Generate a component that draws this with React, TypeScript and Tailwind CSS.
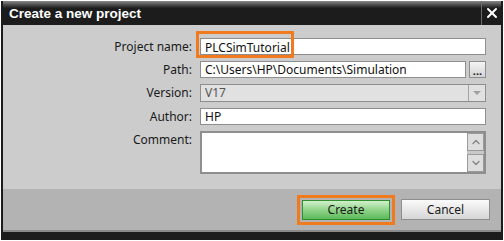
import { ChevronDown, ChevronUp, X } from 'lucide-react';

const font = { fontFamily: '"Noto Sans", "DejaVu Sans", sans-serif' };

function Label({ children }: { children: React.ReactNode }) {
  return <div className="w-[197px] shrink-0 pr-[8px] text-right text-[12px] text-[#1a1a1a]">{children}</div>;
}

export default function App() {
  return (
    <div className="h-[241px] w-[504px] bg-white pt-px pl-px" style={font}>
      <div className="flex h-[239px] w-[502px] flex-col border-x-2 border-[#1c1c1c] bg-[#cccccc]">
        {/* Title bar */}
        <div className="flex h-[24px] items-stretch bg-gradient-to-b from-[#8a8a8a] via-[#1c1c1c] via-30% to-[#1c1c1c]">
          <div
            className="flex-1 pl-[6px] pt-[3px] text-[13.5px] font-bold text-white"
            style={{ fontFamily: '"Liberation Sans", Arial, sans-serif' }}
          >
            Create a new project
          </div>
          <div className="flex w-[20px] items-center justify-center border-l border-[#6a6a6a]">
            <X className="h-[16px] w-[16px] text-white" strokeWidth={3} />
          </div>
        </div>

        {/* Form */}
        <div className="flex flex-1 flex-col gap-[6px] pt-[13px]">
          <div className="flex h-[17px] items-center">
            <Label>Project name:</Label>
            <div className="relative h-[17px] w-[286px] border border-[#8e8e8e] bg-white pl-[4px] text-[12px] leading-[15px] text-[#111]">
              <div className="pointer-events-none absolute -left-[5px] -top-[8px] z-10 h-[27px] w-[98px] border-[3px] border-[#f07a1d]" />
              PLCSimTutorial<span className="ml-[2px] inline-block h-[13px] w-px translate-y-[2px] bg-[#111]" />
            </div>
          </div>
          <div className="flex h-[17px] items-center">
            <Label>Path:</Label>
            <div className="flex h-[17px] w-[286px] gap-[3px]">
              <div className="flex-1 border border-[#8e8e8e] bg-white pl-[4px] text-[12px] leading-[15px] text-[#111]">
                C:\Users\HP\Documents\Simulation
              </div>
              <div className="flex w-[17px] items-end justify-center border border-[#8e8e8e] bg-gradient-to-b from-[#f4f4f4] to-[#d4d4d4] pb-[2px] text-[11px] font-bold leading-[8px] text-[#222]">
                ...
              </div>
            </div>
          </div>
          <div className="flex h-[18px] items-center">
            <Label>Version:</Label>
            <div className="flex h-[18px] w-[286px] items-stretch border border-[#8e8e8e] bg-[#e1e1e1]">
              <div className="flex-1 pl-[4px] text-[12px] leading-[16px] text-[#555]">V17</div>
              <div className="flex w-[17px] items-center justify-center border-l border-[#a5a5a5]">
                <span className="h-0 w-0 border-x-[4px] border-t-[4px] border-x-transparent border-t-[#a0a0a0]" />
              </div>
            </div>
          </div>
          <div className="flex h-[17px] items-center">
            <Label>Author:</Label>
            <div className="h-[17px] w-[286px] border border-[#8e8e8e] bg-white pl-[4px] text-[12px] leading-[15px] text-[#111]">
              HP
            </div>
          </div>
          <div className="flex items-start">
            <Label>Comment:</Label>
            <div className="flex h-[43px] w-[286px] border-2 border-[#8e8e8e] bg-white">
              <div className="flex-1" />
              <div className="flex w-[17px] flex-col justify-between bg-[#c8c8c8]">
                <div className="flex h-[18px] items-center justify-center border border-[#9a9a9a] bg-[#dedede]">
                  <ChevronUp className="h-[12px] w-[12px] text-[#8a8a8a]" strokeWidth={3} />
                </div>
                <div className="flex h-[18px] items-center justify-center border border-[#9a9a9a] bg-[#dedede]">
                  <ChevronDown className="h-[12px] w-[12px] text-[#8a8a8a]" strokeWidth={3} />
                </div>
              </div>
            </div>
          </div>
        </div>

        {/* Footer */}
        <div className="flex h-[43px] items-center justify-end gap-[6px] border-b-[2px] border-[#8a8a8a] bg-[#b3b3b3] pr-[11px]">
          <div className="border-[3px] border-[#f07a1d] p-[2px]">
            <div className="flex h-[20px] w-[88px] items-center justify-center border border-[#2f8f2f] bg-gradient-to-b from-[#d2f0cc] via-[#8fd489] to-[#5cb959] text-[12px] text-[#1a1a1a]">
              Create
            </div>
          </div>
          <div className="flex h-[21px] w-[89px] items-center justify-center border border-[#8e8e8e] bg-gradient-to-b from-[#fafafa] to-[#d6d6d6] text-[12px] text-[#1a1a1a]">
            Cancel
          </div>
        </div>
        <div className="h-[8px] bg-[#1c1c1c]" />
      </div>
    </div>
  );
}
